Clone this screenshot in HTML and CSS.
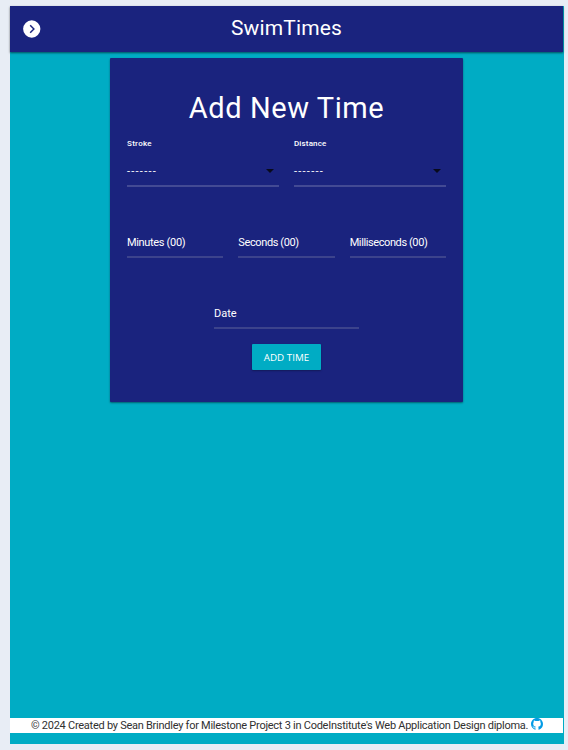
FILE: index.html
```html
<!DOCTYPE html>
<html lang="en">
<head>
<meta charset="utf-8">
<title>SwimTimes</title>
<link rel="stylesheet" href="styles.css">
</head>
<body>
<div class="app">
  <header class="navbar">
    <a class="menu" aria-label="Menu"><svg viewBox="0 0 18 18"><circle cx="9" cy="9" r="8.9" fill="#fff"/><path d="M7.4 5.2 11.2 9l-3.8 3.8" fill="none" stroke="#1a237e" stroke-width="1.5"/></svg></a>
    <span class="brand">SwimTimes</span>
  </header>
  <main>
    <form class="card">
      <h1><span>Add New Time</span></h1>
      <div class="row selects">
        <div class="select"><label><span class="small stroke">Stroke</span></label><div class="value"><span>-------</span><i class="caret"></i></div></div>
        <div class="select"><label><span class="small distance">Distance</span></label><div class="value"><span>-------</span><i class="caret"></i></div></div>
      </div>
      <div class="row times">
        <div class="field"><span class="minutes">Minutes (00)</span></div>
        <div class="field"><span class="seconds">Seconds (00)</span></div>
        <div class="field"><span class="millis">Milliseconds (00)</span></div>
      </div>
      <div class="field date"><span>Date</span></div>
      <button type="button" class="btn"><span>ADD TIME</span></button>
    </form>
  </main>
  <footer><span class="copy">© 2024 Created by Sean Brindley for Milestone Project 3 in CodeInstitute's Web Application Design diploma.</span><svg class="github" viewBox="0 0 16 16"><path fill="#039be5" d="M8 0C3.58 0 0 3.58 0 8c0 3.54 2.29 6.53 5.47 7.59.4.07.55-.17.55-.38v-1.49c-2.01.37-2.53-.49-2.69-.94-.09-.23-.48-.94-.82-1.13-.28-.15-.68-.52-.01-.53.63-.01 1.08.58 1.23.82.72 1.21 1.87.87 2.33.66.07-.52.28-.87.51-1.07-1.78-.2-3.64-.89-3.64-3.95 0-.87.31-1.59.82-2.15-.08-.2-.36-1.02.08-2.12 0 0 .67-.21 2.2.82a7.5 7.5 0 0 1 4 0c1.53-1.04 2.2-.82 2.2-.82.44 1.1.16 1.92.08 2.12.51.56.82 1.27.82 2.15 0 3.07-1.87 3.75-3.65 3.95.29.25.54.73.54 1.48v2.2c0 .21.15.46.55.38A8 8 0 0 0 16 8c0-4.42-3.58-8-8-8Z"/></svg></footer>
</div>
</body>
</html>
```
FILE: styles.css
```css
* { box-sizing: border-box; }
body {
  margin: 0;
  height: 750px;
  padding: 6px 4px 6px 10px;
  background: #e8edf5;
  color: #fff;
  font-family: Roboto, "Liberation Sans", sans-serif;
  font-size: 11px;
  overflow: hidden;
}
.app {
  height: 738px;
  display: flex;
  flex-direction: column;
  background: #00acc4;
}
.navbar {
  height: 46px;
  flex: none;
  margin-right: 1px;
  padding: 0 13px;
  display: grid;
  grid-template-columns: 18px 1fr 18px;
  align-items: center;
  background: #1a237e;
  box-shadow: 0 1px 2px rgba(0, 0, 0, .55);
}
.menu, .menu svg { display: block; width: 18px; height: 18px; }
.menu svg { width: 17.5px; }
.brand { justify-self: center; font-size: 21px; line-height: 24px; letter-spacing: .15px; margin-bottom: 2px; }
main { flex: 1; padding-top: 5.5px; }
.card {
  width: 353px;
  height: 344px;
  margin: 0 0 0 100px;
  padding: 34.5px 17px 0;
  border-radius: 1px;
  background: #1a237e;
  box-shadow: 0 1px 2px rgba(0, 0, 0, .45);
}
h1 { margin: 0; height: 34px; font-size: 29px; line-height: 33px; font-weight: 400; text-align: center; letter-spacing: .6px; white-space: nowrap; }
.row { display: grid; gap: 15px; }
.selects { grid-template-columns: 1fr 1fr; margin-top: 12px; }
label { display: block; height: 12px; font-size: 8px; line-height: 12px; font-weight: 500; }
.stroke { letter-spacing: .3px; }
.distance { letter-spacing: .15px; }
.value {
  height: 38px;
  margin-top: -1px;
  padding: 8px 5px 0 0;
  display: flex;
  align-items: center;
  justify-content: space-between;
  border-bottom: 2px solid #434a94;
  letter-spacing: 1.25px;
}
.caret { width: 8px; height: 4px; background: #080a1c; clip-path: polygon(0 0, 100% 0, 50% 100%); }
.field { height: 25px; line-height: 19px; border-bottom: 2px solid #3c438c; white-space: nowrap; }
.times { grid-template-columns: repeat(3, 1fr); margin-top: 47px; }
.times .field { height: 24px; line-height: 18px; }
.minutes { letter-spacing: -.33px; }
.seconds { letter-spacing: -.38px; }
.millis { letter-spacing: -.4px; }
.date { width: 145px; margin: 46px auto 0; }
.btn {
  display: block;
  width: 69px;
  height: 26px;
  margin: 15px auto 0;
  padding: 0;
  border: 0;
  border-radius: 1px;
  background: #00acc4;
  color: #fff;
  font: 9.8px/26px "Open Sans", sans-serif;
  white-space: nowrap;
  box-shadow: 0 1px 2px rgba(0, 0, 0, .3);
}
.btn span { display: block; padding-top: 1px; line-height: 25px; }
footer {
  flex: none;
  height: 15px;
  margin: 0 1px 11px 0;
  padding-left: 21px;
  display: flex;
  align-items: center;
  background: #fff;
  color: #303030;
  white-space: nowrap;
  line-height: 15px;
}
.copy { width: 500px; letter-spacing: -.26px; }
.github { width: 12px; height: 12px; flex: none; margin-top: -3px; }
```
